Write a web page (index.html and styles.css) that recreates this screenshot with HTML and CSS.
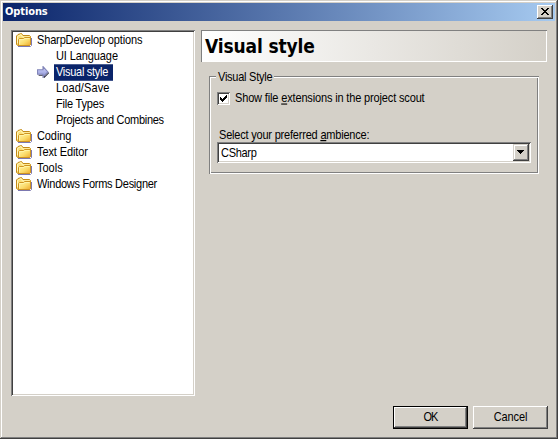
FILE: index.html
```html
<!DOCTYPE html>
<html lang="en">
<head>
<meta charset="utf-8">
<title>Options</title>
<link rel="stylesheet" href="styles.css">
</head>
<body>
<svg class="defs" width="0" height="0" aria-hidden="true">
  <defs>
    <linearGradient id="gold" x1="0" y1="0" x2="1" y2="1">
      <stop offset="0" stop-color="#fff8b0"/><stop offset=".55" stop-color="#fbdc6c"/><stop offset="1" stop-color="#eda92c"/>
    </linearGradient>
    <linearGradient id="arrow" x1="0" y1="0" x2="0" y2="1">
      <stop offset="0" stop-color="#d4d6ff"/><stop offset="1" stop-color="#8d94d4"/>
    </linearGradient>
    <symbol id="folder" viewBox="0 0 16 14">
      <path d="M2 13.5h12.5l1-1V5" fill="none" stroke="#7c78b0"/>
      <path d="M.5 11.5V3L2 1.5 5.5.5 7 2.5h6.5l1 1v8l-1 1H2z" fill="#fbe078" stroke="#c38a18"/>
      <path d="M1.5 10V3.5l3.5-2L6.5 4h7" fill="none" stroke="#fff7bc"/>
      <path d="M2.5 12.5v-6l1-1h4l1-1h6v7l-1 1z" fill="url(#gold)" stroke="#cf9420"/>
      <path d="M3.5 11.500V6.500h4.500l1-1h4.500" fill="none" stroke="#fff4a6"/>
    </symbol>
  </defs>
</svg>
<div class="window">
  <div class="titlebar">
    <span class="caption">Options</span>
    <button class="close" aria-label="Close"><svg width="8" height="7" viewBox="0 0 8 7" shape-rendering="crispEdges"><path d="M0 0h2v1h1v1h2V1h1V0h2v1H7v1H6v1H5v1h1v1h1v1h1v1H6V6H5V5H3v1H2v1H0V6h1V5h1V4h1V3H2V2H1V1H0z"/></svg></button>
  </div>
  <div class="content">
    <ul class="tree">
      <li><svg class="folder"><use href="#folder"/></svg><span class="t-sharp">SharpDevelop options</span></li>
      <li class="child"><span class="t-ui">UI Language</span></li>
      <li class="child selected"><svg class="arrow" viewBox="0 0 11 11"><path d="M1.500 8.500h5v2l4.500-4.500" fill="none" stroke="#303040"/><path d="M.5 3.500h5v-3l4.500 5-4.500 4.500V7.500h-5z" fill="url(#arrow)" stroke="#8185b8"/></svg><span class="t-visual">Visual style</span></li>
      <li class="child"><span class="t-load">Load/Save</span></li>
      <li class="child"><span class="t-file">File Types</span></li>
      <li class="child"><span class="t-projects">Projects and Combines</span></li>
      <li><svg class="folder"><use href="#folder"/></svg><span class="t-coding">Coding</span></li>
      <li><svg class="folder"><use href="#folder"/></svg><span class="t-editor">Text Editor</span></li>
      <li><svg class="folder"><use href="#folder"/></svg><span class="t-tools">Tools</span></li>
      <li><svg class="folder"><use href="#folder"/></svg><span class="t-forms">Windows Forms Designer</span></li>
    </ul>
    <div class="panel">
      <h1 class="banner">Visual style</h1>
      <section class="group">
        <div class="frame">
          <h2 class="legend">Visual Style</h2>
          <div class="check">
            <span class="box"><svg width="7" height="7" viewBox="0 0 7 7" shape-rendering="crispEdges"><path d="M0 2h1v1h1v1h1V3h1V2h1V1h1V0h1v3H6v1H5v1H4v1H3v1H2V6H1V5H0z"/></svg></span>
            <span class="t-show">Show file <u>e</u>xtensions in the project scout</span>
          </div>
          <div class="select-label"><span class="t-select">Select your preferred <u>a</u>mbience:</span></div>
          <div class="combo">
            <span class="value t-csharp">CSharp</span>
            <span class="drop"><svg width="7" height="4" viewBox="0 0 7 4" shape-rendering="crispEdges"><path d="M0 0h7v1H6v1H5v1H4v1H3V3H2V2H1V1H0z"/></svg></span>
          </div>
        </div>
      </section>
    </div>
  </div>
  <div class="footer">
    <button class="btn default"><span class="t-ok">OK</span></button>
    <button class="btn"><span class="t-cancel">Cancel</span></button>
  </div>
</div>
</body>
</html>
```
FILE: styles.css
```css
* { box-sizing: border-box; }
html, body { margin: 0; }
body { background: #d4d0c8; color: #000; font: 11px/16px "Liberation Sans", Arial, sans-serif; overflow: hidden; }
button { appearance: none; margin: 0; padding: 0; border: 0; border-radius: 0; background: #d4d0c8; color: #000; font: inherit; }
span { white-space: nowrap; }
.defs { position: absolute; }

.window {
  width: 558px; height: 439px; padding: 3px; background: #d4d0c8;
  display: flex; flex-direction: column;
  box-shadow: inset -1px -1px #404040, inset 1px 1px #d4d0c8, inset -2px -2px #808080, inset 2px 2px #fff;
}
.titlebar {
  height: 18px; padding: 0 2px; display: flex; align-items: center; justify-content: space-between;
  background: linear-gradient(90deg, #0a246a, #a6caf0);
}
.caption { color: #fff; font: bold 11px/18px "DejaVu Sans Condensed", "DejaVu Sans", sans-serif; letter-spacing: -.1px; }
.close {
  width: 16px; height: 14px; padding: 3px 0 0 4px; display: flex; align-items: flex-start;
  box-shadow: inset -1px -1px #404040, inset 1px 1px #fff, inset -2px -2px #808080;
}
.close svg { display: block; }

.content { display: flex; gap: 6px; padding: 9px 8px 0; }
.tree {
  width: 184px; height: 366px; margin: 0; padding: 2px; list-style: none; background: #fff;
  box-shadow: inset 1px 1px #808080, inset -1px -1px #fff, inset 2px 2px #404040, inset -2px -2px #d4d0c8;
}
.tree li { display: flex; height: 16px; padding-left: 3px; gap: 4px; align-items: center; }
.tree span { padding: 0 5px 0 2px; margin-left: -1px; line-height: 14.6px; }
.tree .child { padding-left: 42px; gap: 6px; }
.tree .selected { padding-left: 24px; }
.selected span { background: #0a246a; color: #fff; }
.folder { width: 16px; height: 14px; }
.arrow { width: 12px; height: 12px; }

[class*="t-"] { display: inline-block; transform: scaleY(1.1); }
.t-sharp { letter-spacing: -.15px; }
.t-ui { letter-spacing: -.1px; }
.t-visual { letter-spacing: -.28px; }
.t-load { letter-spacing: .1px; }
.t-file { letter-spacing: -.2px; }
.t-projects { letter-spacing: -.28px; }
.t-coding, .t-editor { letter-spacing: -.1px; }
.t-forms { letter-spacing: -.27px; }
.t-show { letter-spacing: -.15px; }
.t-select { letter-spacing: -.2px; }
.t-csharp { letter-spacing: -.3px; }
.t-ok { letter-spacing: -.9px; }
.t-cancel { letter-spacing: -.15px; }

.panel { width: 346px; }
.banner {
  height: 32px; margin: 0; padding-left: 4px; white-space: nowrap;
  font: bold 19px/32px "DejaVu Sans Condensed", "DejaVu Sans", sans-serif; letter-spacing: -.15px;
  background: linear-gradient(90deg, #fff, #d4d0c8);
  box-shadow: inset 1px 1px #808080, inset -1px -1px #fff;
}
.group { padding: 14px 8px 0; }
.frame {
  height: 98px; padding: 0 8px;
  box-shadow: inset 1px 1px #808080, inset -1px -1px #fff, inset 2px 2px #fff, inset -2px -2px #808080;
}
.legend { width: 58px; height: 13px; margin: 0 0 0 -1px; padding-left: 2px; background: #d4d0c8; font: inherit; line-height: 13px; letter-spacing: -.25px; white-space: nowrap; transform: translateY(-5px) scaleY(1.1); }
.check { display: flex; gap: 5px; align-items: center; height: 16px; margin-top: 1px; }
.box { width: 13px; height: 13px; padding: 3px; background: #fff; box-shadow: inset 1px 1px #808080, inset -1px -1px #fff, inset 2px 2px #404040, inset -2px -2px #d4d0c8; }
.box svg { display: block; }
u { text-underline-offset: 1px; text-decoration-thickness: 1px; text-decoration-skip-ink: none; }
.select-label { height: 16px; margin-top: 20px; padding-left: 2px; }
.select-label span { line-height: 15px; }
.combo {
  display: flex; justify-content: space-between; width: 314px; height: 21px; padding: 2px; background: #fff;
  box-shadow: inset 1px 1px #808080, inset -1px -1px #fff, inset 2px 2px #404040, inset -2px -2px #d4d0c8;
}
.value { padding-left: 2px; line-height: 18px; }
.drop { width: 16px; height: 17px; padding: 6px 0 0 4px; background: #d4d0c8; box-shadow: inset -1px -1px #404040, inset 1px 1px #d4d0c8, inset -2px -2px #808080, inset 2px 2px #fff; }
.drop svg { display: block; }

.footer { display: flex; gap: 5px; justify-content: flex-end; padding: 10px 7px 0 0; }
.btn { width: 75px; height: 23px; line-height: 21px; box-shadow: inset -1px -1px #404040, inset 1px 1px #fff, inset -2px -2px #808080; }
.default { box-shadow: inset 0 0 0 1px #000, inset -2px -2px #404040, inset 2px 2px #fff, inset -3px -3px #808080; }
```
